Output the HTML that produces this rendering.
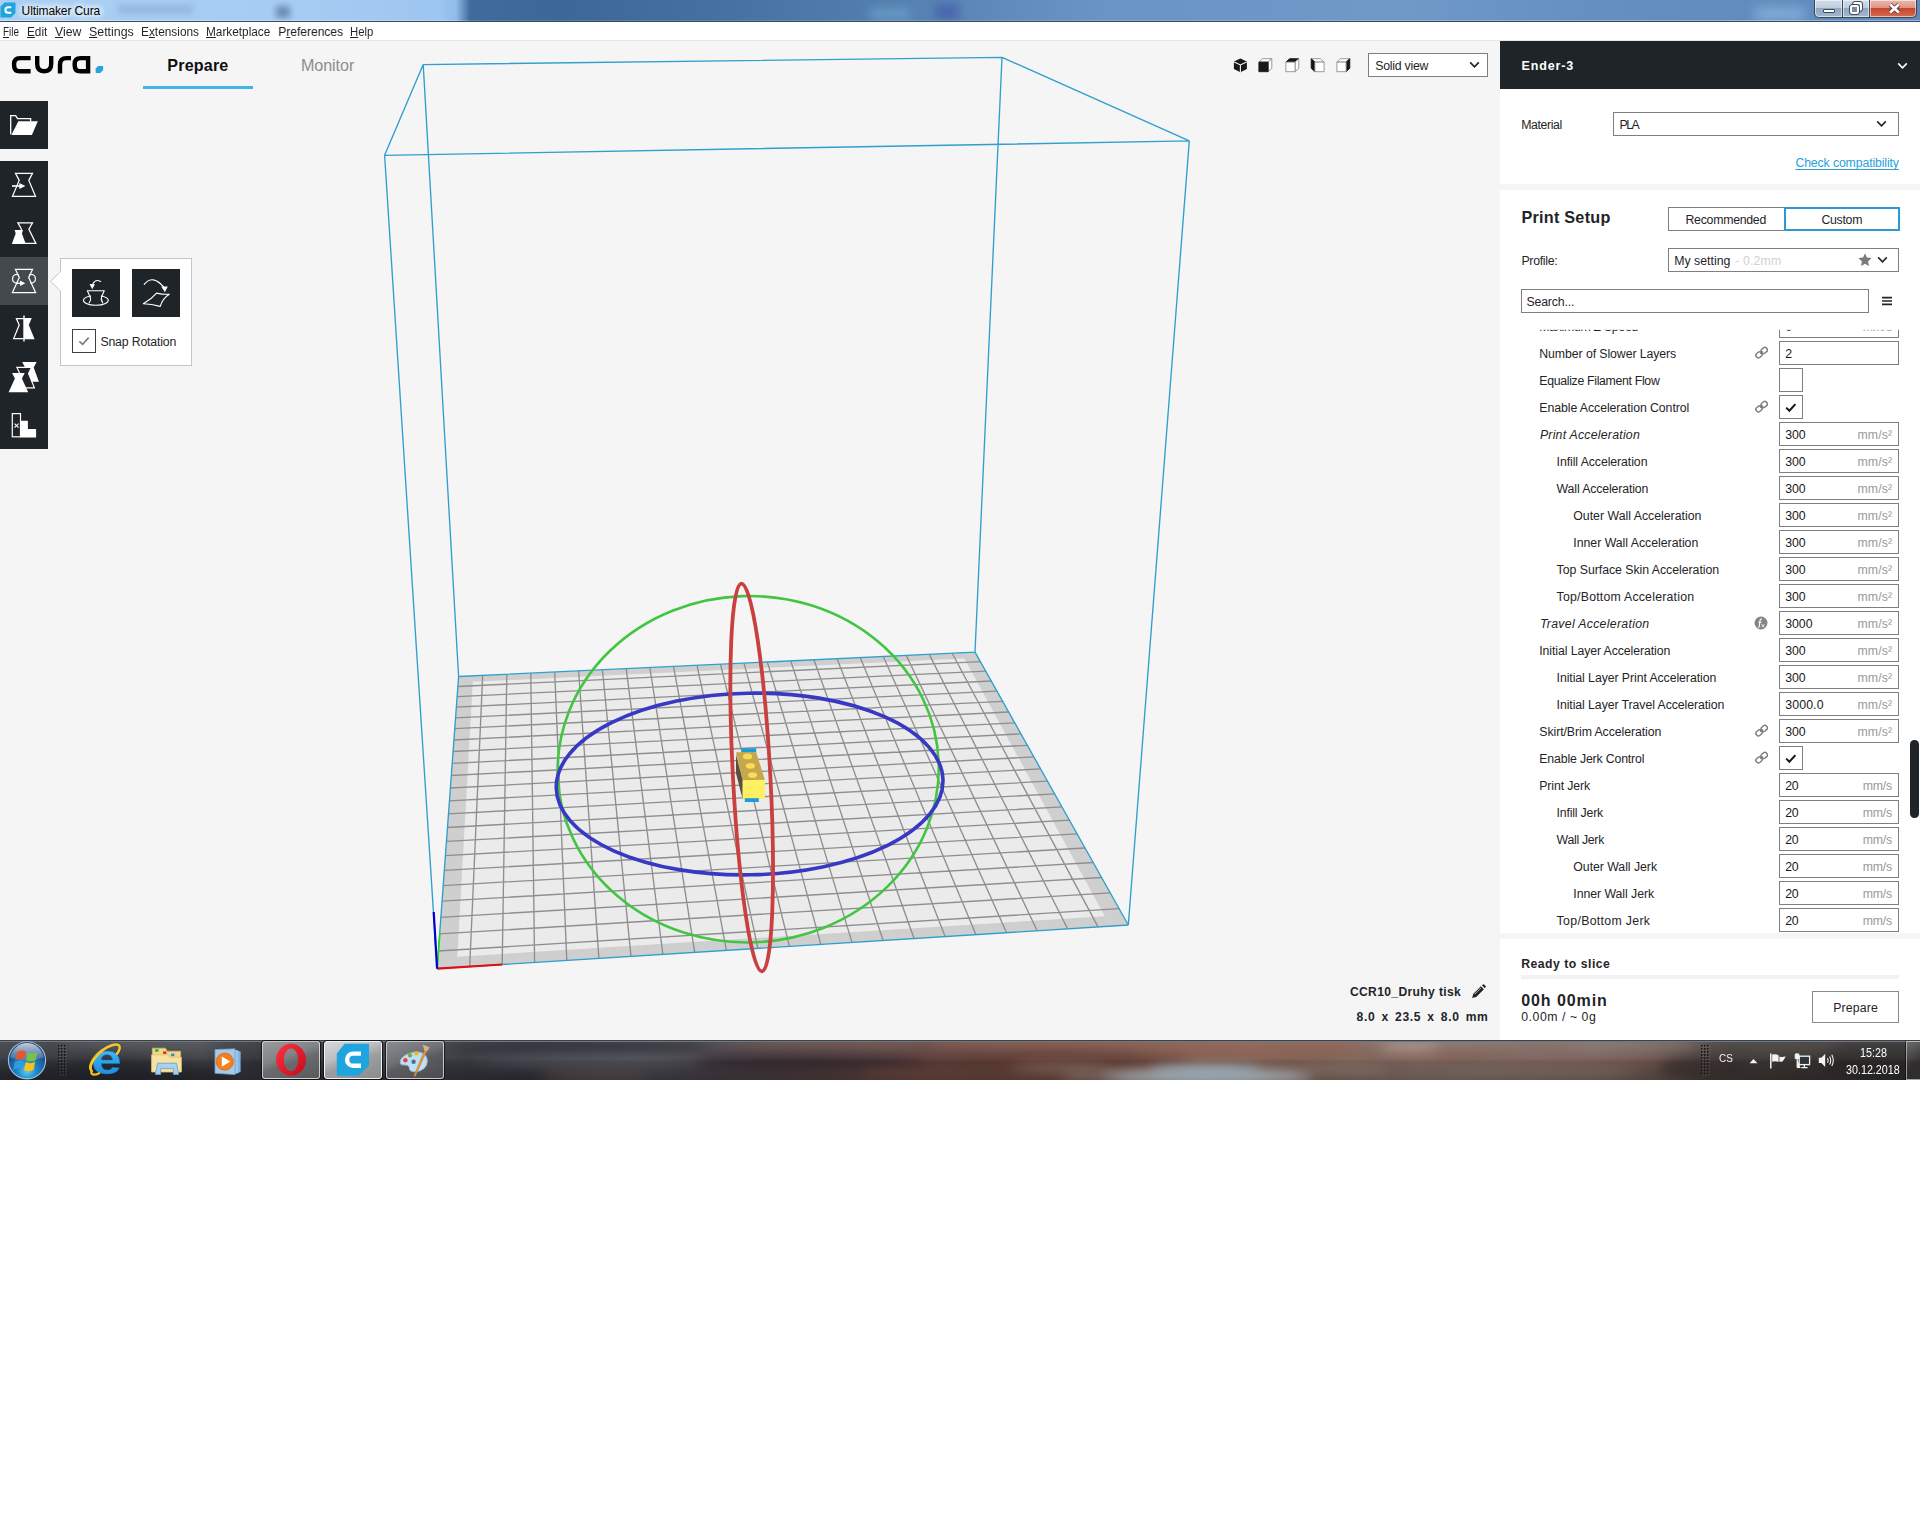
<!DOCTYPE html>
<html><head><meta charset="utf-8"><title>Ultimaker Cura</title>
<style>
*{box-sizing:border-box;margin:0;padding:0}
html,body{width:1920px;height:1540px;background:#fff;overflow:hidden}
body{font-family:"Liberation Sans",sans-serif;font-size:12px;color:#1f2428;position:relative}
.t{position:absolute;white-space:nowrap;line-height:1}
.abs{position:absolute}
#titlebar{position:absolute;left:0;top:0;width:1920px;height:22px;background:linear-gradient(90deg,#a9cff4 0px,#a6ccf3 300px,#9dc6f0 440px,#8fbcea 456px,#3f6b9d 470px,#3c6799 560px,#44709f 700px,#5480b0 900px,#6a94c4 1100px,#7099c8 1400px,#648fc0 1600px,#5d88ba 1920px)}
#titlebar:after{content:"";position:absolute;left:0;right:0;bottom:0;height:1px;background:#3c4a5c}
#menubar{position:absolute;left:0;top:22px;width:1920px;height:19px;background:#fff}
#app{position:absolute;left:0;top:41px;width:1920px;height:999px;background:#f5f5f5}
#taskbar{position:absolute;left:0;top:1040px;width:1920px;height:40px}

.menu u{text-decoration:underline;text-underline-offset:1px}
.glow{text-shadow:0 0 6px #fff,0 0 6px #fff,0 0 8px #fff,0 0 10px #fff}
.wbtn{position:absolute;top:0;height:18px;border:1px solid #3a4656;border-top:none;background:linear-gradient(#d3dde9 0,#becdde 45%,#92a7c3 50%,#a3b6cf 100%);box-shadow:inset 0 0 0 1px rgba(255,255,255,.55)}

.tbtn{position:absolute;left:0;width:48px;height:48px;background:#1f2428}
.tbtn svg{position:absolute;left:0;top:0}

#panel{position:absolute;left:1500px;top:41px;width:420px;height:999px;background:#fff}
.box{position:absolute;background:#fff;border:1px solid #7f7f7f}
#list{position:absolute;left:1500px;top:329px;width:420px;height:604.3px;overflow:hidden;clip-path:inset(0.8px 0 0 0)}

#taskbar{overflow:hidden;background:linear-gradient(90deg,#3a3c43 0,#33353b 120px,#3f4147 200px,#303238 260px,#35373d 440px,#303139 520px,#43434b 640px,#453c42 740px,#503d3e 820px,#63443f 920px,#6c483e 1060px,#7c574b 1150px,#826457 1250px,#7e5f52 1330px,#837069 1420px,#7d6a63 1500px,#76625b 1600px,#5c4c47 1680px,#403a38 1730px,#383432 1800px,#332f2e 1920px)}
#taskbar .edge{position:absolute;left:0;top:0;width:1920px;height:2px;background:linear-gradient(#22252b,#8d949c)}
.tkb{position:absolute;top:1px;height:38px;border-radius:3px;border:1px solid rgba(230,235,240,.75);box-shadow:0 0 0 1px rgba(10,10,14,.75)}
.bl{position:absolute;filter:blur(6px);border-radius:50%}
</style></head>
<body>
<div id="titlebar"><svg class="abs" style="left:0;top:2px" width="16" height="16" viewBox="0 0 16 16"><path d="M4.5,0.5 H15.5 V11 L11,15.5 H0.5 V4.5 Z" fill="#1fa5dc"/><path d="M11.3,5.2 H8.2 A2.8,2.8 0 0 0 8.2,10.8 H11.3" fill="none" stroke="#fff" stroke-width="2.1"/></svg><div class="t glow" style="left:21.60px;top:5px;font-size:12.0px;color:#000;letter-spacing:-0.109px;">Ultimaker Cura</div><div class="abs" style="left:118px;top:5px;width:75px;height:9px;background:#7f9cc0;opacity:.45;filter:blur(3px)"></div><div class="abs" style="left:276px;top:6px;width:14px;height:12px;background:#44618c;opacity:.6;filter:blur(3px)"></div><div class="abs" style="left:870px;top:8px;width:40px;height:12px;background:#7db7dc;opacity:.45;filter:blur(5px)"></div><div class="abs" style="left:935px;top:4px;width:24px;height:16px;background:#3a4aa8;opacity:.5;filter:blur(5px)"></div><div class="abs" style="left:1755px;top:8px;width:50px;height:12px;background:#9cc8ee;opacity:.6;filter:blur(6px)"></div><div class="wbtn" style="left:1814px;width:29px;border-radius:0 0 0 5px"><div class="abs" style="left:8px;top:9px;width:12px;height:4px;background:#fff;border:1px solid #3b4a5e;border-radius:1px"></div></div><div class="wbtn" style="left:1842px;width:28px"><div class="abs" style="left:10px;top:2px;width:9px;height:9px;border:2px solid #fff;outline:1px solid #3b4a5e;border-radius:2px;background:#a9bad2"></div><div class="abs" style="left:6.5px;top:5px;width:9.5px;height:9px;border:2.6px solid #fff;outline:1px solid #3b4a5e;background:#7f8a96;border-radius:2px"></div></div><div class="wbtn" style="left:1869px;width:48px;border-radius:0 0 5px 0;background:linear-gradient(#ecb9ad 0,#df9384 45%,#c4472f 50%,#d56c50 100%)"><svg class="abs" style="left:18px;top:3px" width="13" height="11" viewBox="0 0 13 11"><path d="M2.2,1.6 L10.8,9.4 M10.8,1.6 L2.2,9.4" stroke="#5a3a36" stroke-width="4.4" stroke-linecap="butt"/><path d="M2.2,1.6 L10.8,9.4 M10.8,1.6 L2.2,9.4" stroke="#fff" stroke-width="2.7"/></svg></div><div class="abs" style="left:0;top:19.5px;width:1920px;height:1.5px;background:linear-gradient(90deg,rgba(255,255,255,.45),rgba(255,255,255,.25) 460px,rgba(255,255,255,.12) 480px,rgba(255,255,255,.2) 1300px,rgba(255,255,255,.4))"></div></div>
<div id="menubar"><div class="t menu" style="left:3.30px;top:4px;font-size:12.0px;transform:scaleX(0.8274);transform-origin:0 0;"><u>F</u>ile</div><div class="t menu" style="left:27.30px;top:4px;font-size:12.0px;transform:scaleX(0.9817);transform-origin:0 0;"><u>E</u>dit</div><div class="t menu" style="left:55.30px;top:4px;font-size:12.0px;transform:scaleX(1.0196);transform-origin:0 0;"><u>V</u>iew</div><div class="t menu" style="left:89.30px;top:4px;font-size:12.0px;transform:scaleX(1.0309);transform-origin:0 0;"><u>S</u>ettings</div><div class="t menu" style="left:141.00px;top:4px;font-size:12.0px;transform:scaleX(0.9881);transform-origin:0 0;">E<u>x</u>tensions</div><div class="t menu" style="left:206.00px;top:4px;font-size:12.0px;transform:scaleX(0.9837);transform-origin:0 0;"><u>M</u>arketplace</div><div class="t menu" style="left:278.30px;top:4px;font-size:12.0px;transform:scaleX(1.0000);transform-origin:0 0;">P<u>r</u>eferences</div><div class="t menu" style="left:350.00px;top:4px;font-size:12.0px;transform:scaleX(0.9441);transform-origin:0 0;"><u>H</u>elp</div><div class="abs" style="left:0;top:18px;width:1920px;height:1px;background:#e6e6e6"></div></div>
<div id="app"></div>
<svg id="vp" width="1500" height="1000" viewBox="0 40 1500 1000" style="position:absolute;left:0;top:40px">
<polygon points="437.1,968.6 1128.3,925.0 975.0,652.2 458.6,676.5" fill="#cfcfcf"/>
<polygon points="457.3,956.7 1104.8,916.3 964.4,658.5 472.8,681.8" fill="#ebebeb"/>
<path d="M469.7,966.5 L482.7,675.4 M438.4,951.0 L1119.1,908.7 M502.2,964.5 L506.8,674.2 M439.7,933.9 L1110.2,892.8 M534.6,962.5 L530.8,673.1 M440.9,917.3 L1101.6,877.5 M566.8,960.4 L554.7,672.0 M442.1,901.2 L1093.2,862.5 M598.9,958.4 L578.6,670.9 M443.2,885.6 L1085.0,848.0 M631.0,956.4 L602.4,669.7 M444.3,870.4 L1077.1,833.9 M662.9,954.4 L626.2,668.6 M445.4,855.7 L1069.4,820.2 M694.7,952.4 L649.8,667.5 M446.5,841.4 L1061.9,806.9 M726.4,950.4 L673.5,666.4 M447.5,827.5 L1054.6,793.9 M757.9,948.4 L697.0,665.3 M448.5,813.9 L1047.5,781.2 M789.4,946.4 L720.5,664.2 M449.5,800.8 L1040.6,768.9 M820.8,944.4 L744.0,663.1 M450.4,788.0 L1033.9,756.9 M852.0,942.4 L767.3,662.0 M451.3,775.5 L1027.3,745.3 M883.1,940.5 L790.7,660.9 M452.2,763.4 L1020.9,733.9 M914.1,938.5 L813.9,659.8 M453.1,751.5 L1014.7,722.8 M945.1,936.6 L837.1,658.7 M453.9,740.0 L1008.6,712.0 M975.9,934.6 L860.2,657.6 M454.8,728.7 L1002.6,701.4 M1006.6,932.7 L883.3,656.5 M455.6,717.8 L996.8,691.1 M1037.2,930.7 L906.3,655.4 M456.3,707.1 L991.2,681.0 M1067.6,928.8 L929.3,654.4 M457.1,696.6 L985.7,671.2 M1098.0,926.9 L952.2,653.3 M457.9,686.5 L980.3,661.6" stroke="#8e8e8e" stroke-width="1.35" fill="none"/>
<path d="M437.1,968.6 L1128.3,925.0 M1128.3,925.0 L975.0,652.2 M975.0,652.2 L458.6,676.5 M458.6,676.5 L437.1,968.6 M384.6,155.3 L1189.3,140.9 M1189.3,140.9 L1002.0,57.3 M1002.0,57.3 L423.2,64.6 M423.2,64.6 L384.6,155.3 M437.1,968.6 L384.6,155.3 M1128.3,925.0 L1189.3,140.9 M975.0,652.2 L1002.0,57.3 M458.6,676.5 L423.2,64.6" stroke="#2f9fcd" stroke-width="1.35" fill="none"/>
<path d="M437.1,968.6 L502.2,964.5" stroke="#e01010" stroke-width="2.2"/>
<path d="M437.1,968.6 L439.9,933.5" stroke="#20e020" stroke-width="1.6"/>
<path d="M437.1,968.6 L433.7,912.0" stroke="#0000d0" stroke-width="2.2"/>
<g>
<rect x="741.8" y="748.4" width="14.4" height="4.2" fill="#1b9bd8"/>
<polygon points="736,752.2 756.2,752.2 764.9,779.9 742.7,780.4" fill="#c7a74c"/>
<polygon points="736,754.5 742.7,780.3 742.7,799.5 736,773.2" fill="#5a4e3c"/>
<polygon points="742.7,780.3 764.9,779.7 764.9,798.6 742.7,799.5" fill="#fdf062"/>
<rect x="744.8" y="798.2" width="14" height="3.8" fill="#1b9bd8"/>
<ellipse cx="747.5" cy="756.4" rx="4.6" ry="2.9" fill="#f7dc58"/>
<ellipse cx="750.4" cy="765.8" rx="4.6" ry="2.9" fill="#f7dc58"/>
<ellipse cx="752.6" cy="775.1" rx="4.6" ry="2.9" fill="#f7dc58"/>
</g>
<ellipse cx="748.2" cy="769.2" rx="190.6" ry="173.2" transform="rotate(-2 748.2 769.2)" fill="none" stroke="#42c542" stroke-width="2.6"/>
<ellipse cx="749.6" cy="784.0" rx="193.4" ry="90.8" transform="rotate(-1.2 749.6 784)" fill="none" stroke="#3838c4" stroke-width="3.6"/>
<ellipse cx="751.7" cy="777.5" rx="18.7" ry="194.2" transform="rotate(-3.03 751.7 777.5)" fill="none" stroke="#c84040" stroke-width="3.8"/>
</svg>
<svg class="abs" style="left:0px;top:44px" width="120" height="40" viewBox="0 0 120 40">
<g fill="none" stroke="#000" stroke-width="4.4">
<path d="M30.6,14.1 H19.9 Q14.1,14.1 14.1,19.9 V21.4 Q14.1,27.2 19.9,27.2 H30.6"/>
<path d="M37.2,11.9 V20.0 Q37.2,27.2 44.2,27.2 Q51.2,27.2 51.2,20.0 V11.9"/>
<path d="M60.0,29.4 V20.6 Q60.0,14.1 66.5,14.1 H71.0"/>
<path d="M88.1,29.4 V14.1 H80.5 Q74.7,14.1 74.7,19.9 V21.4 Q74.7,27.2 80.5,27.2 H88.1"/>
</g>
<path d="M98.2,21.9 H102.3 Q103.2,21.9 103.2,22.8 V26.0 L100.4,29.0 H96.5 Q95.6,29.0 95.6,28.1 V24.6 Z" fill="#27a5dd"/>
</svg><div class="t" style="left:167.30px;top:57px;font-size:16.1px;color:#0e1012;font-weight:bold;letter-spacing:0.172px;">Prepare</div><div class="abs" style="left:143px;top:86px;width:110px;height:3px;background:#45b3e8"></div><div class="t" style="left:301.00px;top:57px;font-size:16.1px;color:#8a8d90;letter-spacing:-0.065px;">Monitor</div>
<div class="tbtn" style="top:101px"><svg width="48" height="48" viewBox="0 0 48 48"><path d="M10.7,33.3 V14.6 H15.6 L17.6,17.6 H30.6 V20.2" fill="none" stroke="#fff" stroke-width="1.3"/><path d="M18.3,20.3 H37.8 L31.9,34 H11.4 Z" fill="#fff"/></svg></div><div class="abs" style="left:0;top:161px;width:48px;height:288px;background:#1f2428"></div><div class="abs" style="left:0;top:257px;width:48px;height:48px;background:#44494d"></div><svg class="abs" style="left:0;top:161px" width="48" height="48" viewBox="0 0 48 48"><path d="M15.5,12.4 L32.5,12.4 L28.8,19.4 L35.5,35.3 L12.5,35.3 L19.2,19.4 Z" fill="none" stroke="#fff" stroke-width="1.25" stroke-linejoin="miter"/><path d="M12,25 H20.5" stroke="#fff" stroke-width="1.6"/><path d="M19.3,21.9 L25.4,25 L19.3,28.1 Z" fill="#fff"/></svg><svg class="abs" style="left:0;top:209px" width="48" height="48" viewBox="0 0 48 48"><path d="M17.9,13.9 L32.5,13.9 L28.9,20.3 L35.9,34.4 L14.5,34.4 L21.5,20.3 Z" fill="none" stroke="#fff" stroke-width="1.25" stroke-linejoin="miter"/><path d="M14.6,21.0 L23.0,21.0 L21.9,24.5 L25.8,35.0 L11.8,35.0 L15.7,24.5 Z" fill="#fff"/></svg><svg class="abs" style="left:0;top:257px" width="48" height="48" viewBox="0 0 48 48"><path d="M15.5,12.4 L32.5,12.4 L28.7,20.6 L35.6,35.6 L12.4,35.6 L19.3,20.6 Z" fill="none" stroke="#fff" stroke-width="1.25" stroke-linejoin="miter"/><path d="M18.8,18.4 A3.9,4.3 0 1 0 17.8,25.8 M29.2,18.4 A3.9,4.3 0 1 1 30.2,25.8" fill="none" stroke="#fff" stroke-width="1.2"/><path d="M16.5,26.3 H20.5" stroke="#fff" stroke-width="1.3"/><path d="M20,23.5 L25.3,26.3 L20,29.1 Z" fill="#fff"/></svg><svg class="abs" style="left:0;top:305px" width="48" height="48" viewBox="0 0 48 48"><path d="M24,13.6 H16.4 L19.2,20.0 L13.7,33.6 H24" fill="none" stroke="#fff" stroke-width="1.25" stroke-linejoin="miter"/><path d="M24,13 H31.7 L28.8,20.0 L34.6,34.2 H24 Z" fill="#fff"/><path d="M24,10.4 V36.4" stroke="#fff" stroke-width="1.4"/></svg><svg class="abs" style="left:0;top:353px" width="48" height="48" viewBox="0 0 48 48"><path d="M22.2,9.0 L36.6,9.0 L33.7,14.6 L38.9,28.7 L19.9,28.7 L25.1,14.6 Z" fill="#fff"/><path d="M16.9,14.4 L31.5,14.4 L28.6,20.4 L34.4,34.8 L14.0,34.8 L19.8,20.4 Z" fill="#1f2428" stroke="#fff" stroke-width="1.2"/><path d="M12.1,20.0 L24.7,20.0 L21.9,25.4 L28.2,39.2 L8.6,39.2 L14.9,25.4 Z" fill="#fff"/></svg><svg class="abs" style="left:0;top:401px" width="48" height="48" viewBox="0 0 48 48"><rect x="12.3" y="12.6" width="8.2" height="23.2" fill="none" stroke="#fff" stroke-width="1.2"/><path d="M20.4,19.7 H27.9 V28.1 H36.1 V36.4 H20.4 Z" fill="#fff"/><path d="M14.5,22.6 L18.6,26.6 M18.6,22.6 L14.5,26.6" stroke="#fff" stroke-width="1.1"/></svg><div class="abs" style="left:59.5px;top:257.5px;width:132.5px;height:108px;background:#fff;border:1px solid #c3c6c9"></div><svg class="abs" style="left:49px;top:269px" width="12" height="24" viewBox="0 0 12 24"><path d="M11.5,2.6 L1.6,12.3 L11.5,22 " fill="#fff" stroke="#c3c6c9" stroke-width="1"/><path d="M11.2,3.4 V21.2" stroke="#fff" stroke-width="1.6"/></svg><div class="abs" style="left:72px;top:269px;width:48px;height:48px;background:#1f2428"></div><svg class="abs" style="left:72px;top:269px" width="48" height="48" viewBox="0 0 48 48"><path d="M15.2,21.6 H32.4 L29.7,27.6 Q29.4,31.6 31.6,34.6 M16.2,34.6 Q18.6,31.6 17.9,27.6 Z" fill="none" stroke="none"/><path d="M15.4,21.7 H32.2 M17.9,27.6 L15.4,21.7 M29.7,27.6 L32.2,21.7" fill="none" stroke="#fff" stroke-width="1.15" stroke-linecap="round" stroke-linejoin="round"/><path d="M18.3,27.0 A12.4,4.9 0 1 0 29.4,27.0" fill="none" stroke="#fff" stroke-width="1.15" stroke-linecap="round" stroke-linejoin="round"/><path d="M18.2,27.2 Q19.4,30.5 17.2,33.8 M29.6,27.2 Q28.6,30.5 30.6,33.8" fill="none" stroke="#fff" stroke-width="1.15" stroke-linecap="round" stroke-linejoin="round"/><path d="M28.6,12.4 Q22.4,9.4 20.3,16.4" fill="none" stroke="#fff" stroke-width="1.15" stroke-linecap="round" stroke-linejoin="round"/><path d="M17.5,15.0 L20.2,20.3 L23.0,15.2 Z" fill="#fff"/></svg><div class="abs" style="left:132px;top:269px;width:48px;height:48px;background:#1f2428"></div><svg class="abs" style="left:132px;top:269px" width="48" height="48" viewBox="0 0 48 48"><path d="M12.2,15.4 Q20.6,5.2 31.4,17.6" fill="none" stroke="#fff" stroke-width="1.15" stroke-linecap="round" stroke-linejoin="round"/><path d="M29.0,18.2 L35.4,17.0 L33.8,23.2 Z" fill="#fff" transform="rotate(12 33 19)"/><path d="M11.3,34.8 Q19.4,30.2 24.6,24.1 Q31.2,25.6 37.2,25.2 Q30.6,29.4 28.2,37.4 Q19.6,35.2 11.3,34.8 Z" fill="none" stroke="#fff" stroke-width="1.15" stroke-linecap="round" stroke-linejoin="round"/></svg><div class="abs" style="left:72px;top:329px;width:24px;height:24px;background:#fff;border:1px solid #3c4044"></div><svg class="abs" style="left:72px;top:329px" width="24" height="24" viewBox="0 0 24 24"><path d="M7.4,12.4 L10.6,15.4 L16.7,8.6" fill="none" stroke="#7d7d7d" stroke-width="1.7"/></svg><div class="t" style="left:100.40px;top:336px;font-size:12.3px;letter-spacing:-0.163px;">Snap Rotation</div>
<svg class="abs" style="left:1232.5px;top:57.8px" width="15" height="15" viewBox="0 0 15 15"><path d="M7.4,0.6 L13.9,3.6 V10.9 L7.4,14.2 L0.9,10.9 V3.6 Z" fill="#16191c"/><path d="M1.2,3.9 L7.4,7 L13.6,3.9 M7.4,7 V14" stroke="#f5f5f5" stroke-width="1.1" fill="none"/></svg><svg class="abs" style="left:1258.3px;top:57.8px" width="15" height="15" viewBox="0 0 15 15"><path d="M0.9,4.1 L4.6000000000000005,0.6999999999999997 H13.8 L10.1,4.1 Z" fill="#fff" stroke="#8e8e8e" stroke-width="0.9" stroke-linejoin="round"/><path d="M10.1,4.1 L13.8,0.6999999999999997 V10.299999999999999 L10.1,13.7 Z" fill="#fff" stroke="#8e8e8e" stroke-width="0.9" stroke-linejoin="round"/><path d="M0.9,4.1 H10.1 V13.7 H0.9 Z" fill="#16191c" stroke="#16191c" stroke-width="0.9" stroke-linejoin="round"/></svg><svg class="abs" style="left:1284.5px;top:57.8px" width="15" height="15" viewBox="0 0 15 15"><path d="M0.9,4.1 L4.6000000000000005,0.6999999999999997 H13.8 L10.1,4.1 Z" fill="#16191c" stroke="#16191c" stroke-width="0.9" stroke-linejoin="round"/><path d="M10.1,4.1 L13.8,0.6999999999999997 V10.299999999999999 L10.1,13.7 Z" fill="#fff" stroke="#8e8e8e" stroke-width="0.9" stroke-linejoin="round"/><path d="M0.9,4.1 H10.1 V13.7 H0.9 Z" fill="#fff" stroke="#8e8e8e" stroke-width="0.9" stroke-linejoin="round"/></svg><svg class="abs" style="left:1310.3px;top:57.8px" width="15" height="15" viewBox="0 0 15 15"><g transform="translate(15,0) scale(-1,1)"><path d="M0.9,4.1 L4.6000000000000005,0.6999999999999997 H13.8 L10.1,4.1 Z" fill="#fff" stroke="#8e8e8e" stroke-width="0.9" stroke-linejoin="round"/><path d="M10.1,4.1 L13.8,0.6999999999999997 V10.299999999999999 L10.1,13.7 Z" fill="#16191c" stroke="#16191c" stroke-width="0.9" stroke-linejoin="round"/><path d="M0.9,4.1 H10.1 V13.7 H0.9 Z" fill="#fff" stroke="#8e8e8e" stroke-width="0.9" stroke-linejoin="round"/></g></svg><svg class="abs" style="left:1336.4px;top:57.8px" width="15" height="15" viewBox="0 0 15 15"><path d="M0.9,4.1 L4.6000000000000005,0.6999999999999997 H13.8 L10.1,4.1 Z" fill="#fff" stroke="#8e8e8e" stroke-width="0.9" stroke-linejoin="round"/><path d="M10.1,4.1 L13.8,0.6999999999999997 V10.299999999999999 L10.1,13.7 Z" fill="#16191c" stroke="#16191c" stroke-width="0.9" stroke-linejoin="round"/><path d="M0.9,4.1 H10.1 V13.7 H0.9 Z" fill="#fff" stroke="#8e8e8e" stroke-width="0.9" stroke-linejoin="round"/></svg><div class="abs" style="left:1368px;top:53px;width:120px;height:24px;background:#fff;border:1px solid #7f7f7f"></div><div class="t" style="left:1375.30px;top:60px;font-size:12.3px;letter-spacing:-0.242px;">Solid view</div><svg class="abs" style="left:1469px;top:61px" width="11" height="8" viewBox="0 0 11 8"><path d="M1.2,1.4 L5.5,5.8 L9.8,1.4" fill="none" stroke="#1f2428" stroke-width="1.7"/></svg>
<div id="panel"></div>
<div class="abs" style="left:1500px;top:41px;width:420px;height:47.6px;background:#1f2428"></div>
<div class="t" style="left:1521.50px;top:60px;font-size:12.5px;color:#fff;font-weight:bold;letter-spacing:0.843px;">Ender-3</div>
<svg class="abs" style="left:1897px;top:61.5px" width="11" height="8" viewBox="0 0 11 8"><path d="M1.2,1.4 L5.5,5.8 L9.8,1.4" fill="none" stroke="#fff" stroke-width="1.55"/></svg>
<div class="t" style="left:1521.20px;top:119px;font-size:12.3px;letter-spacing:-0.393px;">Material</div>
<div class="box" style="left:1613px;top:112.2px;width:286px;height:23.6px;"></div>
<div class="t" style="left:1619.40px;top:119px;font-size:12.3px;letter-spacing:-1.425px;">PLA</div>
<svg class="abs" style="left:1876px;top:120px" width="11" height="8" viewBox="0 0 11 8"><path d="M1.2,1.4 L5.5,5.8 L9.8,1.4" fill="none" stroke="#1f2428" stroke-width="1.55"/></svg>
<div class="t" style="left:1795.40px;top:157px;font-size:12.3px;color:#2a9fd8;letter-spacing:-0.131px;text-decoration:underline;text-underline-offset:1.5px;text-decoration-skip-ink:none;">Check compatibility</div>
<div class="abs" style="left:1500px;top:184.3px;width:420px;height:5.5px;background:#f5f5f5"></div>
<div class="t" style="left:1521.40px;top:209px;font-size:16.2px;font-weight:bold;letter-spacing:0.259px;">Print Setup</div>
<div class="box" style="left:1668px;top:207.3px;width:116.6px;height:23.5px;"></div>
<div class="t" style="left:1685.50px;top:214px;font-size:12.3px;letter-spacing:-0.261px;">Recommended</div>
<div class="box" style="left:1784px;top:207.3px;width:115.8px;height:23.5px;border:2px solid #2a9ad2"></div>
<div class="t" style="left:1821.40px;top:214px;font-size:12.3px;letter-spacing:-0.276px;">Custom</div>
<div class="t" style="left:1521.40px;top:255px;font-size:12.3px;letter-spacing:-0.269px;">Profile:</div>
<div class="box" style="left:1668px;top:248.3px;width:231px;height:23.4px;"></div>
<div class="t" style="left:1674.20px;top:255px;font-size:12.3px;letter-spacing:0.016px;">My setting</div>
<div class="t" style="left:1735.20px;top:255px;font-size:12.3px;color:#cfd1d3;letter-spacing:0.149px;">- 0.2mm</div>
<svg class="abs" style="left:1858px;top:252.6px" width="14" height="13.8" viewBox="0 0 14 13" preserveAspectRatio="none"><path d="M7,0.2 L8.9,4.3 L13.5,4.8 L10.1,7.9 L11.0,12.4 L7,10.1 L3.0,12.4 L3.9,7.9 L0.5,4.8 L5.1,4.3 Z" fill="#7a7a7a"/></svg>
<svg class="abs" style="left:1876.6px;top:256px" width="11" height="8" viewBox="0 0 11 8"><path d="M1.2,1.4 L5.5,5.8 L9.8,1.4" fill="none" stroke="#1f2428" stroke-width="1.55"/></svg>
<div class="box" style="left:1521px;top:289.1px;width:348px;height:23.5px;"></div>
<div class="t" style="left:1526.40px;top:296px;font-size:12.3px;letter-spacing:-0.141px;">Search...</div>
<svg class="abs" style="left:1882px;top:296px" width="10" height="10" viewBox="0 0 10 10"><path d="M0,1.6 H10 M0,5.0 H10 M0,8.4 H10" stroke="#1f2428" stroke-width="1.7"/></svg>
<div id="list">
<div class="t" style="left:39.30px;top:-8px;font-size:12.3px;letter-spacing:-0.301px;">Maximum Z Speed</div>
<div class="box" style="left:279px;top:-14.65px;width:120px;height:23.3px;"></div>
<div class="t" style="left:285.30px;top:-8px;font-size:12.3px;color:#16191c;">0</div>
<div class="t" style="left:362.80px;top:-8px;font-size:12.3px;color:#969a9e;letter-spacing:-0.22px;">mm/s</div>
<div class="t" style="left:39.30px;top:19px;font-size:12.3px;letter-spacing:-0.081px;">Number of Slower Layers</div>
<svg class="abs" style="left:254.79999999999995px;top:16.7px" width="13.3" height="13.3" viewBox="0 0 14 14"><g transform="rotate(-40 7 7)" fill="none" stroke="#7c7c7c" stroke-width="1.5"><rect x="0.1" y="4.4" width="6.6" height="5.2" rx="2.1"/><rect x="7.3" y="4.4" width="6.6" height="5.2" rx="2.1"/><path d="M5.2,7 H8.8" stroke-width="1.4"/></g></svg>
<div class="box" style="left:279px;top:12.35px;width:120px;height:23.3px;"></div>
<div class="t" style="left:285.30px;top:19px;font-size:12.3px;color:#16191c;">2</div>
<div class="t" style="left:39.30px;top:46px;font-size:12.3px;letter-spacing:-0.317px;">Equalize Filament Flow</div>
<div class="box" style="left:279px;top:39.35px;width:23.7px;height:23.3px;"></div>
<div class="t" style="left:39.30px;top:73px;font-size:12.3px;letter-spacing:-0.069px;">Enable Acceleration Control</div>
<svg class="abs" style="left:254.79999999999995px;top:70.7px" width="13.3" height="13.3" viewBox="0 0 14 14"><g transform="rotate(-40 7 7)" fill="none" stroke="#7c7c7c" stroke-width="1.5"><rect x="0.1" y="4.4" width="6.6" height="5.2" rx="2.1"/><rect x="7.3" y="4.4" width="6.6" height="5.2" rx="2.1"/><path d="M5.2,7 H8.8" stroke-width="1.4"/></g></svg>
<div class="box" style="left:279px;top:66.35px;width:23.7px;height:23.3px;"></div>
<svg class="abs" style="left:279.20000000000005px;top:66.55px" width="23" height="23" viewBox="0 0 23 23"><path d="M7.2,11.6 L10.4,14.7 L16.4,8.1" fill="none" stroke="#16191c" stroke-width="2"/></svg>
<div class="t" style="left:39.90px;top:100px;font-size:12.3px;font-style:italic;letter-spacing:0.233px;">Print Acceleration</div>
<div class="box" style="left:279px;top:93.35px;width:120px;height:23.3px;"></div>
<div class="t" style="left:285.30px;top:100px;font-size:12.3px;color:#16191c;letter-spacing:-0.161px;">300</div>
<div class="t" style="left:357.40px;top:100px;font-size:12.3px;color:#969a9e;letter-spacing:0.161px;">mm/s²</div>
<div class="t" style="left:56.60px;top:127px;font-size:12.3px;letter-spacing:-0.078px;">Infill Acceleration</div>
<div class="box" style="left:279px;top:120.35px;width:120px;height:23.3px;"></div>
<div class="t" style="left:285.30px;top:127px;font-size:12.3px;color:#16191c;letter-spacing:-0.161px;">300</div>
<div class="t" style="left:357.40px;top:127px;font-size:12.3px;color:#969a9e;letter-spacing:0.161px;">mm/s²</div>
<div class="t" style="left:56.60px;top:154px;font-size:12.3px;letter-spacing:-0.13px;">Wall Acceleration</div>
<div class="box" style="left:279px;top:147.35px;width:120px;height:23.3px;"></div>
<div class="t" style="left:285.30px;top:154px;font-size:12.3px;color:#16191c;letter-spacing:-0.161px;">300</div>
<div class="t" style="left:357.40px;top:154px;font-size:12.3px;color:#969a9e;letter-spacing:0.161px;">mm/s²</div>
<div class="t" style="left:73.30px;top:181px;font-size:12.3px;letter-spacing:0.002px;">Outer Wall Acceleration</div>
<div class="box" style="left:279px;top:174.35px;width:120px;height:23.3px;"></div>
<div class="t" style="left:285.30px;top:181px;font-size:12.3px;color:#16191c;letter-spacing:-0.161px;">300</div>
<div class="t" style="left:357.40px;top:181px;font-size:12.3px;color:#969a9e;letter-spacing:0.161px;">mm/s²</div>
<div class="t" style="left:73.30px;top:208px;font-size:12.3px;letter-spacing:-0.015px;">Inner Wall Acceleration</div>
<div class="box" style="left:279px;top:201.35px;width:120px;height:23.3px;"></div>
<div class="t" style="left:285.30px;top:208px;font-size:12.3px;color:#16191c;letter-spacing:-0.161px;">300</div>
<div class="t" style="left:357.40px;top:208px;font-size:12.3px;color:#969a9e;letter-spacing:0.161px;">mm/s²</div>
<div class="t" style="left:56.60px;top:235px;font-size:12.3px;letter-spacing:-0.029px;">Top Surface Skin Acceleration</div>
<div class="box" style="left:279px;top:228.35px;width:120px;height:23.3px;"></div>
<div class="t" style="left:285.30px;top:235px;font-size:12.3px;color:#16191c;letter-spacing:-0.161px;">300</div>
<div class="t" style="left:357.40px;top:235px;font-size:12.3px;color:#969a9e;letter-spacing:0.161px;">mm/s²</div>
<div class="t" style="left:56.60px;top:262px;font-size:12.3px;letter-spacing:0.221px;">Top/Bottom Acceleration</div>
<div class="box" style="left:279px;top:255.35px;width:120px;height:23.3px;"></div>
<div class="t" style="left:285.30px;top:262px;font-size:12.3px;color:#16191c;letter-spacing:-0.161px;">300</div>
<div class="t" style="left:357.40px;top:262px;font-size:12.3px;color:#969a9e;letter-spacing:0.161px;">mm/s²</div>
<div class="t" style="left:39.90px;top:289px;font-size:12.3px;font-style:italic;letter-spacing:0.299px;">Travel Acceleration</div>
<svg class="abs" style="left:254.0px;top:286.9px" width="14" height="14" viewBox="0 0 14 14"><circle cx="7" cy="7" r="6.45" fill="#848484"/><path d="M8.1,3.2 Q6.3,2.6 6.0,4.6 L5.3,10.2 Q5.1,11.6 3.9,11.2 M4.4,6.2 H7.6" fill="none" stroke="#fff" stroke-width="1.1"/><path d="M7.6,8.2 L10.4,11.2 M10.4,8.2 L7.6,11.2" stroke="#fff" stroke-width="0.9"/></svg>
<div class="box" style="left:279px;top:282.35px;width:120px;height:23.3px;"></div>
<div class="t" style="left:285.30px;top:289px;font-size:12.3px;color:#16191c;letter-spacing:-0.055px;">3000</div>
<div class="t" style="left:357.40px;top:289px;font-size:12.3px;color:#969a9e;letter-spacing:0.161px;">mm/s²</div>
<div class="t" style="left:39.30px;top:316px;font-size:12.3px;letter-spacing:-0.093px;">Initial Layer Acceleration</div>
<div class="box" style="left:279px;top:309.35px;width:120px;height:23.3px;"></div>
<div class="t" style="left:285.30px;top:316px;font-size:12.3px;color:#16191c;letter-spacing:-0.161px;">300</div>
<div class="t" style="left:357.40px;top:316px;font-size:12.3px;color:#969a9e;letter-spacing:0.161px;">mm/s²</div>
<div class="t" style="left:56.60px;top:343px;font-size:12.3px;letter-spacing:-0.075px;">Initial Layer Print Acceleration</div>
<div class="box" style="left:279px;top:336.35px;width:120px;height:23.3px;"></div>
<div class="t" style="left:285.30px;top:343px;font-size:12.3px;color:#16191c;letter-spacing:-0.161px;">300</div>
<div class="t" style="left:357.40px;top:343px;font-size:12.3px;color:#969a9e;letter-spacing:0.161px;">mm/s²</div>
<div class="t" style="left:56.60px;top:370px;font-size:12.3px;letter-spacing:-0.076px;">Initial Layer Travel Acceleration</div>
<div class="box" style="left:279px;top:363.35px;width:120px;height:23.3px;"></div>
<div class="t" style="left:285.30px;top:370px;font-size:12.3px;color:#16191c;letter-spacing:0.116px;">3000.0</div>
<div class="t" style="left:357.40px;top:370px;font-size:12.3px;color:#969a9e;letter-spacing:0.161px;">mm/s²</div>
<div class="t" style="left:39.30px;top:397px;font-size:12.3px;letter-spacing:-0.078px;">Skirt/Brim Acceleration</div>
<svg class="abs" style="left:254.79999999999995px;top:394.7px" width="13.3" height="13.3" viewBox="0 0 14 14"><g transform="rotate(-40 7 7)" fill="none" stroke="#7c7c7c" stroke-width="1.5"><rect x="0.1" y="4.4" width="6.6" height="5.2" rx="2.1"/><rect x="7.3" y="4.4" width="6.6" height="5.2" rx="2.1"/><path d="M5.2,7 H8.8" stroke-width="1.4"/></g></svg>
<div class="box" style="left:279px;top:390.35px;width:120px;height:23.3px;"></div>
<div class="t" style="left:285.30px;top:397px;font-size:12.3px;color:#16191c;letter-spacing:-0.161px;">300</div>
<div class="t" style="left:357.40px;top:397px;font-size:12.3px;color:#969a9e;letter-spacing:0.161px;">mm/s²</div>
<div class="t" style="left:39.30px;top:424px;font-size:12.3px;letter-spacing:-0.157px;">Enable Jerk Control</div>
<svg class="abs" style="left:254.79999999999995px;top:421.7px" width="13.3" height="13.3" viewBox="0 0 14 14"><g transform="rotate(-40 7 7)" fill="none" stroke="#7c7c7c" stroke-width="1.5"><rect x="0.1" y="4.4" width="6.6" height="5.2" rx="2.1"/><rect x="7.3" y="4.4" width="6.6" height="5.2" rx="2.1"/><path d="M5.2,7 H8.8" stroke-width="1.4"/></g></svg>
<div class="box" style="left:279px;top:417.35px;width:23.7px;height:23.3px;"></div>
<svg class="abs" style="left:279.20000000000005px;top:417.55px" width="23" height="23" viewBox="0 0 23 23"><path d="M7.2,11.6 L10.4,14.7 L16.4,8.1" fill="none" stroke="#16191c" stroke-width="2"/></svg>
<div class="t" style="left:39.30px;top:451px;font-size:12.3px;letter-spacing:-0.127px;">Print Jerk</div>
<div class="box" style="left:279px;top:444.35px;width:120px;height:23.3px;"></div>
<div class="t" style="left:285.30px;top:451px;font-size:12.3px;color:#16191c;letter-spacing:-0.282px;">20</div>
<div class="t" style="left:362.80px;top:451px;font-size:12.3px;color:#969a9e;letter-spacing:-0.22px;">mm/s</div>
<div class="t" style="left:56.60px;top:478px;font-size:12.3px;letter-spacing:-0.193px;">Infill Jerk</div>
<div class="box" style="left:279px;top:471.35px;width:120px;height:23.3px;"></div>
<div class="t" style="left:285.30px;top:478px;font-size:12.3px;color:#16191c;letter-spacing:-0.282px;">20</div>
<div class="t" style="left:362.80px;top:478px;font-size:12.3px;color:#969a9e;letter-spacing:-0.22px;">mm/s</div>
<div class="t" style="left:56.60px;top:505px;font-size:12.3px;letter-spacing:-0.302px;">Wall Jerk</div>
<div class="box" style="left:279px;top:498.35px;width:120px;height:23.3px;"></div>
<div class="t" style="left:285.30px;top:505px;font-size:12.3px;color:#16191c;letter-spacing:-0.282px;">20</div>
<div class="t" style="left:362.80px;top:505px;font-size:12.3px;color:#969a9e;letter-spacing:-0.22px;">mm/s</div>
<div class="t" style="left:73.30px;top:532px;font-size:12.3px;letter-spacing:-0.035px;">Outer Wall Jerk</div>
<div class="box" style="left:279px;top:525.35px;width:120px;height:23.3px;"></div>
<div class="t" style="left:285.30px;top:532px;font-size:12.3px;color:#16191c;letter-spacing:-0.282px;">20</div>
<div class="t" style="left:362.80px;top:532px;font-size:12.3px;color:#969a9e;letter-spacing:-0.22px;">mm/s</div>
<div class="t" style="left:73.30px;top:559px;font-size:12.3px;letter-spacing:-0.048px;">Inner Wall Jerk</div>
<div class="box" style="left:279px;top:552.35px;width:120px;height:23.3px;"></div>
<div class="t" style="left:285.30px;top:559px;font-size:12.3px;color:#16191c;letter-spacing:-0.282px;">20</div>
<div class="t" style="left:362.80px;top:559px;font-size:12.3px;color:#969a9e;letter-spacing:-0.22px;">mm/s</div>
<div class="t" style="left:56.60px;top:586px;font-size:12.3px;letter-spacing:0.324px;">Top/Bottom Jerk</div>
<div class="box" style="left:279px;top:579.35px;width:120px;height:23.3px;"></div>
<div class="t" style="left:285.30px;top:586px;font-size:12.3px;color:#16191c;letter-spacing:-0.282px;">20</div>
<div class="t" style="left:362.80px;top:586px;font-size:12.3px;color:#969a9e;letter-spacing:-0.22px;">mm/s</div>
</div>
<div class="abs" style="left:1910px;top:739.7px;width:8.6px;height:78.6px;background:#1f2428;border-radius:4.3px"></div>
<div class="abs" style="left:1500px;top:933.3px;width:420px;height:5.3px;background:#f5f5f5"></div>
<div class="t" style="left:1521.20px;top:958px;font-size:12.2px;font-weight:bold;letter-spacing:0.519px;">Ready to slice</div>
<div class="abs" style="left:1521px;top:974.9px;width:378.3px;height:3.7px;background:#f2f2f2"></div>
<div class="t" style="left:1521.20px;top:993px;font-size:16.0px;font-weight:bold;letter-spacing:0.918px;">00h 00min</div>
<div class="t" style="left:1521.20px;top:1011px;font-size:12.3px;letter-spacing:0.535px;">0.00m / ~ 0g</div>
<div class="box" style="left:1812.2px;top:991.3px;width:86.6px;height:31.3px;border-color:#8a8a8a"></div>
<div class="t" style="left:1833.20px;top:1002px;font-size:12.3px;letter-spacing:0.14px;">Prepare</div>
<div class="t" style="left:1349.90px;top:986px;font-size:12.1px;font-weight:bold;letter-spacing:0.362px;">CCR10_Druhy tisk</div><svg class="abs" style="left:1471px;top:984px" width="16" height="15" viewBox="0 0 16 15"><path d="M1.2,13.9 L2.2,9.9 L9.9,2.2 L12.9,5.2 L5.2,12.9 Z" fill="#1f2428"/><path d="M10.9,1.2 L12.1,0.4 Q12.6,0.1 13.1,0.6 L14.6,2.1 Q15.1,2.6 14.7,3.1 L13.9,4.2 Z" fill="#1f2428"/><path d="M3.6,10.3 L9.9,4.0" stroke="#f5f5f5" stroke-width="0.7"/></svg><div class="t" style="left:1356.60px;top:1011px;font-size:12.1px;font-weight:bold;letter-spacing:0.7px;word-spacing:1.95px;">8.0 x 23.5 x 8.0 mm</div>
<div id="taskbar"><div class="bl" style="left:-20px;top:24px;width:260px;height:26px;background:#24262c;opacity:0.8"></div><div class="bl" style="left:60px;top:-6px;width:160px;height:16px;background:#55575d;opacity:0.6"></div><div class="bl" style="left:300px;top:14px;width:180px;height:14px;background:#4b4d55;opacity:0.5"></div><div class="bl" style="left:450px;top:-2px;width:260px;height:14px;background:#22232b;opacity:0.95"></div><div class="bl" style="left:470px;top:16px;width:230px;height:12px;background:#5c5d66;opacity:0.8"></div><div class="bl" style="left:540px;top:30px;width:110px;height:12px;background:#6a5650;opacity:0.7"></div><div class="bl" style="left:700px;top:14px;width:230px;height:14px;background:#33282e;opacity:0.85"></div><div class="bl" style="left:720px;top:-4px;width:200px;height:12px;background:#6e5248;opacity:0.7"></div><div class="bl" style="left:860px;top:30px;width:120px;height:12px;background:#6e4a40;opacity:0.8"></div><div class="bl" style="left:900px;top:12px;width:290px;height:12px;background:#58352e;opacity:0.85"></div><div class="bl" style="left:930px;top:-4px;width:220px;height:10px;background:#8a5a4c;opacity:0.7"></div><div class="bl" style="left:1010px;top:24px;width:100px;height:8px;background:#a5897a;opacity:0.7"></div><div class="bl" style="left:1100px;top:30px;width:215px;height:14px;background:#cfdfe9;opacity:1"></div><div class="bl" style="left:1150px;top:26px;width:110px;height:10px;background:#b4cfe2;opacity:0.9"></div><div class="bl" style="left:1130px;top:2px;width:240px;height:12px;background:#8a5646;opacity:0.8"></div><div class="bl" style="left:1060px;top:32px;width:60px;height:10px;background:#a09088;opacity:0.7"></div><div class="bl" style="left:1300px;top:24px;width:90px;height:14px;background:#94857c;opacity:0.7"></div><div class="bl" style="left:1380px;top:4px;width:60px;height:10px;background:#b8aaa4;opacity:0.7"></div><div class="bl" style="left:1360px;top:12px;width:160px;height:8px;background:#7c4a40;opacity:0.7"></div><div class="bl" style="left:1440px;top:26px;width:200px;height:12px;background:#8d7b74;opacity:0.7"></div><div class="bl" style="left:1500px;top:18px;width:200px;height:8px;background:#8a5a4c;opacity:0.6"></div><div class="bl" style="left:1560px;top:0px;width:140px;height:12px;background:#8a7a74;opacity:0.6"></div><div class="bl" style="left:1660px;top:14px;width:90px;height:26px;background:#3a3030;opacity:0.7"></div><div class="bl" style="left:1820px;top:2px;width:120px;height:36px;background:#2a2828;opacity:0.7"></div><div class="bl" style="left:1740px;top:0px;width:100px;height:12px;background:#4a4442;opacity:0.6"></div><div class="abs" style="left:0;top:0;width:1920px;height:40px;background:linear-gradient(rgba(255,255,255,.10) 0,rgba(255,255,255,.03) 45%,rgba(0,0,0,.10) 55%,rgba(0,0,0,.22) 100%)"></div><div class="edge"></div><svg class="abs" style="left:6px;top:0px" width="42" height="40" viewBox="0 0 42 40">
<defs><radialGradient id="orb" cx="50%" cy="78%" r="75%"><stop offset="0" stop-color="#5fd0f4"/><stop offset=".35" stop-color="#1f86c6"/><stop offset=".75" stop-color="#1c4f8c"/><stop offset="1" stop-color="#12345f"/></radialGradient>
<linearGradient id="orbhi" x1="0" y1="0" x2="0" y2="1"><stop offset="0" stop-color="#fff" stop-opacity=".75"/><stop offset="1" stop-color="#fff" stop-opacity=".08"/></linearGradient></defs>
<circle cx="21" cy="20.3" r="18.6" fill="url(#orb)" stroke="#9fc4e2" stroke-width="1.1"/>
<path d="M4.2,17.5 A17,17 0 0 1 37.8,17.5 Q21,24 4.2,17.5 Z" fill="url(#orbhi)"/>
<g transform="translate(21.4 20.4) scale(1.22)">
<path d="M-8.4,-6.8 Q-4.6,-9.2 -1.0,-7.0 L-2.4,-0.6 Q-5.8,-2.4 -9.8,-0.2 Z" fill="#e8552a"/>
<path d="M0.4,-6.4 Q4.0,-4.4 8.2,-6.6 L6.8,-0.2 Q2.8,1.8 -1.0,-0.2 Z" fill="#7cc242"/>
<path d="M-10.2,1.2 Q-6.4,-1.2 -2.8,0.8 L-4.2,7.4 Q-7.8,5.4 -11.6,7.8 Z" fill="#2f9be0"/>
<path d="M-1.4,1.4 Q2.4,3.4 6.4,1.2 L5.0,7.8 Q1.0,9.8 -2.8,7.8 Z" fill="#f9c21b"/>
</g></svg><svg class="abs" style="left:57.8px;top:4.8px" width="11.0" height="33.0"><rect x="0.9" y="0.9" width="1.6" height="1.6" fill="rgba(255,255,255,.18)"/><rect x="0.0" y="0.0" width="1.6" height="1.6" fill="#15161a"/><rect x="3.9" y="0.9" width="1.6" height="1.6" fill="rgba(255,255,255,.18)"/><rect x="3.0" y="0.0" width="1.6" height="1.6" fill="#15161a"/><rect x="6.9" y="0.9" width="1.6" height="1.6" fill="rgba(255,255,255,.18)"/><rect x="6.0" y="0.0" width="1.6" height="1.6" fill="#15161a"/><rect x="0.9" y="4.0" width="1.6" height="1.6" fill="rgba(255,255,255,.18)"/><rect x="0.0" y="3.1" width="1.6" height="1.6" fill="#15161a"/><rect x="3.9" y="4.0" width="1.6" height="1.6" fill="rgba(255,255,255,.18)"/><rect x="3.0" y="3.1" width="1.6" height="1.6" fill="#15161a"/><rect x="6.9" y="4.0" width="1.6" height="1.6" fill="rgba(255,255,255,.18)"/><rect x="6.0" y="3.1" width="1.6" height="1.6" fill="#15161a"/><rect x="0.9" y="7.1000000000000005" width="1.6" height="1.6" fill="rgba(255,255,255,.18)"/><rect x="0.0" y="6.2" width="1.6" height="1.6" fill="#15161a"/><rect x="3.9" y="7.1000000000000005" width="1.6" height="1.6" fill="rgba(255,255,255,.18)"/><rect x="3.0" y="6.2" width="1.6" height="1.6" fill="#15161a"/><rect x="6.9" y="7.1000000000000005" width="1.6" height="1.6" fill="rgba(255,255,255,.18)"/><rect x="6.0" y="6.2" width="1.6" height="1.6" fill="#15161a"/><rect x="0.9" y="10.200000000000001" width="1.6" height="1.6" fill="rgba(255,255,255,.18)"/><rect x="0.0" y="9.3" width="1.6" height="1.6" fill="#15161a"/><rect x="3.9" y="10.200000000000001" width="1.6" height="1.6" fill="rgba(255,255,255,.18)"/><rect x="3.0" y="9.3" width="1.6" height="1.6" fill="#15161a"/><rect x="6.9" y="10.200000000000001" width="1.6" height="1.6" fill="rgba(255,255,255,.18)"/><rect x="6.0" y="9.3" width="1.6" height="1.6" fill="#15161a"/><rect x="0.9" y="13.3" width="1.6" height="1.6" fill="rgba(255,255,255,.18)"/><rect x="0.0" y="12.4" width="1.6" height="1.6" fill="#15161a"/><rect x="3.9" y="13.3" width="1.6" height="1.6" fill="rgba(255,255,255,.18)"/><rect x="3.0" y="12.4" width="1.6" height="1.6" fill="#15161a"/><rect x="6.9" y="13.3" width="1.6" height="1.6" fill="rgba(255,255,255,.18)"/><rect x="6.0" y="12.4" width="1.6" height="1.6" fill="#15161a"/><rect x="0.9" y="16.4" width="1.6" height="1.6" fill="rgba(255,255,255,.18)"/><rect x="0.0" y="15.5" width="1.6" height="1.6" fill="#15161a"/><rect x="3.9" y="16.4" width="1.6" height="1.6" fill="rgba(255,255,255,.18)"/><rect x="3.0" y="15.5" width="1.6" height="1.6" fill="#15161a"/><rect x="6.9" y="16.4" width="1.6" height="1.6" fill="rgba(255,255,255,.18)"/><rect x="6.0" y="15.5" width="1.6" height="1.6" fill="#15161a"/><rect x="0.9" y="19.5" width="1.6" height="1.6" fill="rgba(255,255,255,.18)"/><rect x="0.0" y="18.6" width="1.6" height="1.6" fill="#15161a"/><rect x="3.9" y="19.5" width="1.6" height="1.6" fill="rgba(255,255,255,.18)"/><rect x="3.0" y="18.6" width="1.6" height="1.6" fill="#15161a"/><rect x="6.9" y="19.5" width="1.6" height="1.6" fill="rgba(255,255,255,.18)"/><rect x="6.0" y="18.6" width="1.6" height="1.6" fill="#15161a"/><rect x="0.9" y="22.599999999999998" width="1.6" height="1.6" fill="rgba(255,255,255,.18)"/><rect x="0.0" y="21.7" width="1.6" height="1.6" fill="#15161a"/><rect x="3.9" y="22.599999999999998" width="1.6" height="1.6" fill="rgba(255,255,255,.18)"/><rect x="3.0" y="21.7" width="1.6" height="1.6" fill="#15161a"/><rect x="6.9" y="22.599999999999998" width="1.6" height="1.6" fill="rgba(255,255,255,.18)"/><rect x="6.0" y="21.7" width="1.6" height="1.6" fill="#15161a"/><rect x="0.9" y="25.7" width="1.6" height="1.6" fill="rgba(255,255,255,.18)"/><rect x="0.0" y="24.8" width="1.6" height="1.6" fill="#15161a"/><rect x="3.9" y="25.7" width="1.6" height="1.6" fill="rgba(255,255,255,.18)"/><rect x="3.0" y="24.8" width="1.6" height="1.6" fill="#15161a"/><rect x="6.9" y="25.7" width="1.6" height="1.6" fill="rgba(255,255,255,.18)"/><rect x="6.0" y="24.8" width="1.6" height="1.6" fill="#15161a"/><rect x="0.9" y="28.8" width="1.6" height="1.6" fill="rgba(255,255,255,.18)"/><rect x="0.0" y="27.900000000000002" width="1.6" height="1.6" fill="#15161a"/><rect x="3.9" y="28.8" width="1.6" height="1.6" fill="rgba(255,255,255,.18)"/><rect x="3.0" y="27.900000000000002" width="1.6" height="1.6" fill="#15161a"/><rect x="6.9" y="28.8" width="1.6" height="1.6" fill="rgba(255,255,255,.18)"/><rect x="6.0" y="27.900000000000002" width="1.6" height="1.6" fill="#15161a"/></svg><svg class="abs" style="left:86px;top:1px" width="40" height="38" viewBox="0 0 40 38">
<defs><linearGradient id="ieg" x1="0" y1="0" x2="0" y2="1"><stop offset="0" stop-color="#7fd4fb"/><stop offset=".5" stop-color="#2fa8ec"/><stop offset="1" stop-color="#1b7fd0"/></linearGradient></defs>
<path d="M6.2,30.4 C1.2,26.6 6.6,15.4 17.2,8.6" fill="none" stroke="#eab414" stroke-width="2.4"/>
<text x="0" y="0" transform="translate(5.2 32.8) scale(1.27 1)" font-family="Liberation Sans" font-weight="bold" font-size="43" fill="url(#ieg)" stroke="#1a78c8" stroke-width=".5">e</text>
<path d="M5.6,30.0 C1.6,25.4 9.6,13.0 21.0,6.4 C28.6,2.2 34.4,2.4 33.6,7.4 C33.2,9.4 32.2,11.2 31.0,12.8" fill="none" stroke="#f6c62a" stroke-width="2.5" stroke-linecap="round"/>
<path d="M5.6,30.0 C4.2,33.8 8.2,34.6 13.0,32.2" fill="none" stroke="#f0bc1e" stroke-width="2.3" stroke-linecap="round"/>
</svg><svg class="abs" style="left:150px;top:6px" width="34" height="30" viewBox="0 0 34 30">
<path d="M2.4,2.2 H15.4 L17.2,5.2 H30.6 V24 H2.4 Z" fill="#f0d78a" stroke="#d2b562" stroke-width=".8"/>
<rect x="5" y="3.2" width="3.6" height="2.6" fill="#2fb14a"/><rect x="13" y="5.4" width="3.4" height="2.6" fill="#d23a2a"/><rect x="21" y="7.6" width="3.4" height="2.6" fill="#3a8ad8"/>
<path d="M3,8.8 H18 L19.8,11.2 H31.4 V26 H1.6 V8.8 Z" fill="#f7e3a1" stroke="#dcc06c" stroke-width=".8"/>
<path d="M5.4,28.4 L7.6,17.2 H26.6 L28.6,28.4 H23.4 V22.6 H10.6 V28.4 Z" fill="#a9d0ee" stroke="#6aa3d4" stroke-width=".9"/>
</svg><svg class="abs" style="left:213px;top:8px" width="30" height="28" viewBox="0 0 30 28">
<path d="M24,2.6 L27.6,3.4 V23.8 L24,25.4 Z" fill="#86b4de"/><path d="M21,1.6 L25,2.6 V25 L21,26.4 Z" fill="#9cc4e8"/>
<path d="M2,1.6 L22,0.8 V26.6 L2,25.2 Z" fill="#a7c9ea" stroke="#6f9fcd" stroke-width=".8"/>
<circle cx="11.8" cy="13.6" r="8.6" fill="#f47f20" stroke="#d96a12" stroke-width=".8"/>
<path d="M8.8,8.6 L17.2,13.6 L8.8,18.8 Z" fill="#fff"/></svg><div class="tkb" style="left:262px;width:58px;background:linear-gradient(160deg,#9a9b9d 0,#828385 40%,#6a6b6d 55%,#58595b 100%)"></div><div class="tkb" style="left:324px;width:58px;background:linear-gradient(160deg,#d6d7d9 0,#bebfc1 35%,#9d9ea0 55%,#8a8b8d 100%);border-color:#f2f4f6"></div><div class="tkb" style="left:386px;width:58px;background:linear-gradient(160deg,#8a8b8f 0,#707175 40%,#5b5c60 55%,#4a4b4f 100%)"></div><svg class="abs" style="left:275px;top:3px" width="32" height="34" viewBox="0 0 32 34">
<defs><linearGradient id="op" x1="0" y1="0" x2="1" y2="1"><stop offset="0" stop-color="#ff3344"/><stop offset="1" stop-color="#c30a1a"/></linearGradient></defs>
<path fill-rule="evenodd" fill="url(#op)" d="M16,0.8 A14.9,16 0 1 0 16,32.8 A14.9,16 0 1 0 16,0.8 Z M16,5.4 A7.2,11.4 0 1 1 16,28.2 A7.2,11.4 0 1 1 16,5.4 Z"/></svg><svg class="abs" style="left:336px;top:3px" width="34" height="34" viewBox="0 0 34 34">
<path d="M8.6,0.8 H33 V22.4 L22.6,32.8 H0.8 V10.4 Z" fill="#1ea5df"/>
<path d="M25,10.6 H17.2 A6.1,6.1 0 0 0 17.2,22.8 H25" fill="none" stroke="#fff" stroke-width="4.4"/></svg><svg class="abs" style="left:398px;top:2px" width="34" height="36" viewBox="0 0 34 36">
<path d="M15.6,10.2 C24.6,8.6 30.2,13.4 29.2,20.4 C28.2,27.6 20.4,30.6 14.4,29.6 C10.2,28.8 12.4,24.8 9.6,23.6 C6.4,22.4 2.6,24.4 2.2,20.6 C1.8,15.6 8.4,11.4 15.6,10.2 Z" fill="#bfe0f4" stroke="#8fb8d4" stroke-width=".8"/>
<circle cx="7.4" cy="18.2" r="2.2" fill="#e2463a"/><circle cx="12" cy="13.2" r="2.2" fill="#69b83c"/><circle cx="18.4" cy="11.4" r="2.2" fill="#f2b92a"/><circle cx="15.6" cy="19.8" r="2.2" fill="#4f6f92"/>
<path d="M26.6,8.2 L28.6,9 L17.2,34.6 L15.8,34 Z" fill="#e59a3a" stroke="#b87422" stroke-width=".5"/>
<path d="M24.8,2.4 L31.6,5.6 L28.8,9.4 L26.2,8.2 Z" fill="#d8b282"/></svg><svg class="abs" style="left:1700.8px;top:4.8px" width="11.0" height="33.0"><rect x="0.9" y="0.9" width="1.6" height="1.6" fill="rgba(255,255,255,.18)"/><rect x="0.0" y="0.0" width="1.6" height="1.6" fill="#15161a"/><rect x="3.9" y="0.9" width="1.6" height="1.6" fill="rgba(255,255,255,.18)"/><rect x="3.0" y="0.0" width="1.6" height="1.6" fill="#15161a"/><rect x="6.9" y="0.9" width="1.6" height="1.6" fill="rgba(255,255,255,.18)"/><rect x="6.0" y="0.0" width="1.6" height="1.6" fill="#15161a"/><rect x="0.9" y="4.0" width="1.6" height="1.6" fill="rgba(255,255,255,.18)"/><rect x="0.0" y="3.1" width="1.6" height="1.6" fill="#15161a"/><rect x="3.9" y="4.0" width="1.6" height="1.6" fill="rgba(255,255,255,.18)"/><rect x="3.0" y="3.1" width="1.6" height="1.6" fill="#15161a"/><rect x="6.9" y="4.0" width="1.6" height="1.6" fill="rgba(255,255,255,.18)"/><rect x="6.0" y="3.1" width="1.6" height="1.6" fill="#15161a"/><rect x="0.9" y="7.1000000000000005" width="1.6" height="1.6" fill="rgba(255,255,255,.18)"/><rect x="0.0" y="6.2" width="1.6" height="1.6" fill="#15161a"/><rect x="3.9" y="7.1000000000000005" width="1.6" height="1.6" fill="rgba(255,255,255,.18)"/><rect x="3.0" y="6.2" width="1.6" height="1.6" fill="#15161a"/><rect x="6.9" y="7.1000000000000005" width="1.6" height="1.6" fill="rgba(255,255,255,.18)"/><rect x="6.0" y="6.2" width="1.6" height="1.6" fill="#15161a"/><rect x="0.9" y="10.200000000000001" width="1.6" height="1.6" fill="rgba(255,255,255,.18)"/><rect x="0.0" y="9.3" width="1.6" height="1.6" fill="#15161a"/><rect x="3.9" y="10.200000000000001" width="1.6" height="1.6" fill="rgba(255,255,255,.18)"/><rect x="3.0" y="9.3" width="1.6" height="1.6" fill="#15161a"/><rect x="6.9" y="10.200000000000001" width="1.6" height="1.6" fill="rgba(255,255,255,.18)"/><rect x="6.0" y="9.3" width="1.6" height="1.6" fill="#15161a"/><rect x="0.9" y="13.3" width="1.6" height="1.6" fill="rgba(255,255,255,.18)"/><rect x="0.0" y="12.4" width="1.6" height="1.6" fill="#15161a"/><rect x="3.9" y="13.3" width="1.6" height="1.6" fill="rgba(255,255,255,.18)"/><rect x="3.0" y="12.4" width="1.6" height="1.6" fill="#15161a"/><rect x="6.9" y="13.3" width="1.6" height="1.6" fill="rgba(255,255,255,.18)"/><rect x="6.0" y="12.4" width="1.6" height="1.6" fill="#15161a"/><rect x="0.9" y="16.4" width="1.6" height="1.6" fill="rgba(255,255,255,.18)"/><rect x="0.0" y="15.5" width="1.6" height="1.6" fill="#15161a"/><rect x="3.9" y="16.4" width="1.6" height="1.6" fill="rgba(255,255,255,.18)"/><rect x="3.0" y="15.5" width="1.6" height="1.6" fill="#15161a"/><rect x="6.9" y="16.4" width="1.6" height="1.6" fill="rgba(255,255,255,.18)"/><rect x="6.0" y="15.5" width="1.6" height="1.6" fill="#15161a"/><rect x="0.9" y="19.5" width="1.6" height="1.6" fill="rgba(255,255,255,.18)"/><rect x="0.0" y="18.6" width="1.6" height="1.6" fill="#15161a"/><rect x="3.9" y="19.5" width="1.6" height="1.6" fill="rgba(255,255,255,.18)"/><rect x="3.0" y="18.6" width="1.6" height="1.6" fill="#15161a"/><rect x="6.9" y="19.5" width="1.6" height="1.6" fill="rgba(255,255,255,.18)"/><rect x="6.0" y="18.6" width="1.6" height="1.6" fill="#15161a"/><rect x="0.9" y="22.599999999999998" width="1.6" height="1.6" fill="rgba(255,255,255,.18)"/><rect x="0.0" y="21.7" width="1.6" height="1.6" fill="#15161a"/><rect x="3.9" y="22.599999999999998" width="1.6" height="1.6" fill="rgba(255,255,255,.18)"/><rect x="3.0" y="21.7" width="1.6" height="1.6" fill="#15161a"/><rect x="6.9" y="22.599999999999998" width="1.6" height="1.6" fill="rgba(255,255,255,.18)"/><rect x="6.0" y="21.7" width="1.6" height="1.6" fill="#15161a"/><rect x="0.9" y="25.7" width="1.6" height="1.6" fill="rgba(255,255,255,.18)"/><rect x="0.0" y="24.8" width="1.6" height="1.6" fill="#15161a"/><rect x="3.9" y="25.7" width="1.6" height="1.6" fill="rgba(255,255,255,.18)"/><rect x="3.0" y="24.8" width="1.6" height="1.6" fill="#15161a"/><rect x="6.9" y="25.7" width="1.6" height="1.6" fill="rgba(255,255,255,.18)"/><rect x="6.0" y="24.8" width="1.6" height="1.6" fill="#15161a"/><rect x="0.9" y="28.8" width="1.6" height="1.6" fill="rgba(255,255,255,.18)"/><rect x="0.0" y="27.900000000000002" width="1.6" height="1.6" fill="#15161a"/><rect x="3.9" y="28.8" width="1.6" height="1.6" fill="rgba(255,255,255,.18)"/><rect x="3.0" y="27.900000000000002" width="1.6" height="1.6" fill="#15161a"/><rect x="6.9" y="28.8" width="1.6" height="1.6" fill="rgba(255,255,255,.18)"/><rect x="6.0" y="27.900000000000002" width="1.6" height="1.6" fill="#15161a"/></svg><div class="t" style="left:1718.70px;top:12px;font-size:11.7px;color:#f0f0f0;transform:scaleX(0.8490);transform-origin:0 0;">CS</div><svg class="abs" style="left:1749px;top:18px" width="9" height="6" viewBox="0 0 9 6"><path d="M0.6,5.2 L4.5,0.9 L8.4,5.2 Z" fill="#f4f4f4"/></svg><svg class="abs" style="left:1769px;top:13px" width="18" height="16" viewBox="0 0 18 16">
<path d="M1.8,0.6 V15.4" stroke="#f4f4f4" stroke-width="1.5"/><path d="M3.2,1.6 Q6.8,0.6 9.6,2.2 V9 Q6.6,7.6 3.2,8.8 Z" fill="#f4f4f4"/><path d="M10.4,3.4 Q13.2,4.6 16.6,3.2 Q15.6,6.4 13.4,8.4 Q11.8,9.2 10.4,8.6 Z" fill="#f4f4f4"/></svg><svg class="abs" style="left:1794px;top:13px" width="17" height="16" viewBox="0 0 17 16">
<rect x="5.2" y="3.2" width="10.4" height="8.4" fill="#30343a" stroke="#f4f4f4" stroke-width="1.3"/><path d="M7.4,14.6 H13.6 M10.4,11.8 V14.4" stroke="#f4f4f4" stroke-width="1.3"/>
<path d="M1.2,1.4 H5 V5.6 H1.2 Z M2.2,0 V1.6 M4,0 V1.6 M3.1,5.6 V14.6 H6.4" fill="#f4f4f4" stroke="#f4f4f4" stroke-width="1"/></svg><svg class="abs" style="left:1818px;top:13px" width="17" height="15" viewBox="0 0 17 15">
<path d="M0.8,4.8 H3.4 L7.2,0.8 V14 L3.4,10 H0.8 Z" fill="#f4f4f4"/><path d="M9.4,5.2 Q10.8,7.4 9.4,9.6 M11.6,3.4 Q13.8,7.4 11.6,11.4 M13.8,1.8 Q16.8,7.4 13.8,13" fill="none" stroke="#f4f4f4" stroke-width="1.1"/></svg><div class="t" style="left:1859.50px;top:7px;font-size:12.0px;color:#fff;transform:scaleX(0.8991);transform-origin:0 0;">15:28</div><div class="t" style="left:1845.70px;top:24px;font-size:12.0px;color:#fff;transform:scaleX(0.8941);transform-origin:0 0;">30.12.2018</div><div class="abs" style="left:1906px;top:1px;width:15px;height:39px;border:1px solid rgba(220,225,230,.6);background:linear-gradient(135deg,rgba(255,255,255,.22),rgba(255,255,255,.04) 60%);box-shadow:-1px 0 0 rgba(0,0,0,.5)"></div></div>
</body></html>
